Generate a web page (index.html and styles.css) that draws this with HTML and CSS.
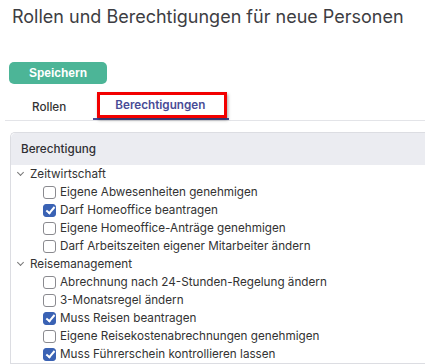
FILE: index.html
```html
<!DOCTYPE html>
<html lang="de">
<head>
  <meta charset="UTF-8">
  <title>Rollen und Berechtigungen</title>
  <link rel="stylesheet" href="styles.css">
</head>
<body>

  <h1 class="page-title">Rollen und Berechtigungen für neue Personen</h1>

  <div class="toolbar">
    <button class="btn-save">Speichern</button>
  </div>

  <nav class="tabs">
    <div class="tab">Rollen</div>
    <div class="tab active">Berechtigungen<span class="highlight"></span></div>
  </nav>

  <div class="panel">
    <div class="panel-head">Berechtigung</div>

    <div class="group">
      <div class="group-title"><span class="chevron"></span>Zeitwirtschaft</div>
      <label class="item"><span class="box"></span>Eigene Abwesenheiten genehmigen</label>
      <label class="item"><span class="box checked"></span>Darf Homeoffice beantragen</label>
      <label class="item"><span class="box"></span>Eigene Homeoffice-Anträge genehmigen</label>
      <label class="item"><span class="box"></span>Darf Arbeitszeiten eigener Mitarbeiter ändern</label>
    </div>

    <div class="group">
      <div class="group-title"><span class="chevron"></span>Reisemanagement</div>
      <label class="item"><span class="box"></span>Abrechnung nach 24-Stunden-Regelung ändern</label>
      <label class="item"><span class="box"></span>3-Monatsregel ändern</label>
      <label class="item"><span class="box checked"></span>Muss Reisen beantragen</label>
      <label class="item"><span class="box"></span>Eigene Reisekostenabrechnungen genehmigen</label>
      <label class="item"><span class="box checked"></span>Muss Führerschein kontrollieren lassen</label>
    </div>
  </div>

</body>
</html>
```

FILE: styles.css
```css
/* Reset */
* {
  margin: 0;
  padding: 0;
  box-sizing: border-box;
}

body {
  font-family: 'Inter', 'Noto Sans', sans-serif;
  color: #333;
  background: #fff;
  overflow: hidden;
}

/* Title */
.page-title {
  font-size: 18px;
  font-weight: 400;
  color: #3d3d42;
  line-height: 24px;
  padding: 5px 0 0 12px;
}

/* Save button */
.toolbar {
  padding: 33px 0 0 9px;
}

.btn-save {
  display: block;
  width: 98px;
  height: 22px;
  border: none;
  border-radius: 5px;
  background-color: #4cb597;
  color: #fff;
  font-family: 'Liberation Sans', Arial, sans-serif;
  font-weight: bold;
  font-size: 12px;
}

/* Tabs */
.tabs {
  display: flex;
  gap: 5px;
  margin: 8px 0 0 5px;
  border-bottom: 1px solid #e3e4e8;
}

.tab {
  position: relative;
  height: 28px;
  padding: 1px 22px 0 27px;
  display: flex;
  align-items: center;
  font-size: 11.7px;
  font-weight: 500;
  color: #333;
}

.tab.active {
  padding: 0 24px 0 22px;
  color: #484b96;
  font-weight: 600;
  border-bottom: 2px solid #484b96;
  margin-bottom: -1px;
}

/* Red annotation box */
.tab .highlight {
  position: absolute;
  left: 4px;
  right: 2px;
  top: 0;
  bottom: 0;
  border: 3px solid #f20000;
  box-shadow: 1px 2px 3px rgba(0, 0, 0, 0.35);
}

/* Permissions panel */
.panel {
  margin: 11px 0 0 10px;
  border: 1px solid #dcdde2;
  border-right: none;
  border-radius: 5px 0 0 0;
}

.panel-head {
  height: 32px;
  line-height: 33px;
  padding-left: 10px;
  background-color: #ebecf1;
  font-size: 11.7px;
  font-weight: 500;
  color: #2f2f33;
  border-radius: 5px 0 0 0;
}

.group-title,
.item {
  display: flex;
  align-items: center;
  height: 18px;
  font-size: 11.7px;
  color: #333;
}

.group-title {
  padding-left: 5px;
}

.chevron {
  width: 5px;
  height: 5px;
  border-right: 1px solid #777;
  border-bottom: 1px solid #777;
  transform: rotate(45deg);
  margin: -3px 7px 0 2px;
}

.item {
  padding-left: 32px;
}

.box {
  width: 13px;
  height: 13px;
  border: 1px solid #8a8a8f;
  border-radius: 3px;
  margin-right: 4px;
  background: #fff;
  position: relative;
}

.box.checked {
  background-color: #3a62b4;
  border-color: #3a62b4;
}

.box.checked::after {
  content: '';
  position: absolute;
  left: 3.5px;
  top: 0.5px;
  width: 3px;
  height: 7px;
  border-right: 2px solid #fff;
  border-bottom: 2px solid #fff;
  transform: rotate(40deg);
}
```
